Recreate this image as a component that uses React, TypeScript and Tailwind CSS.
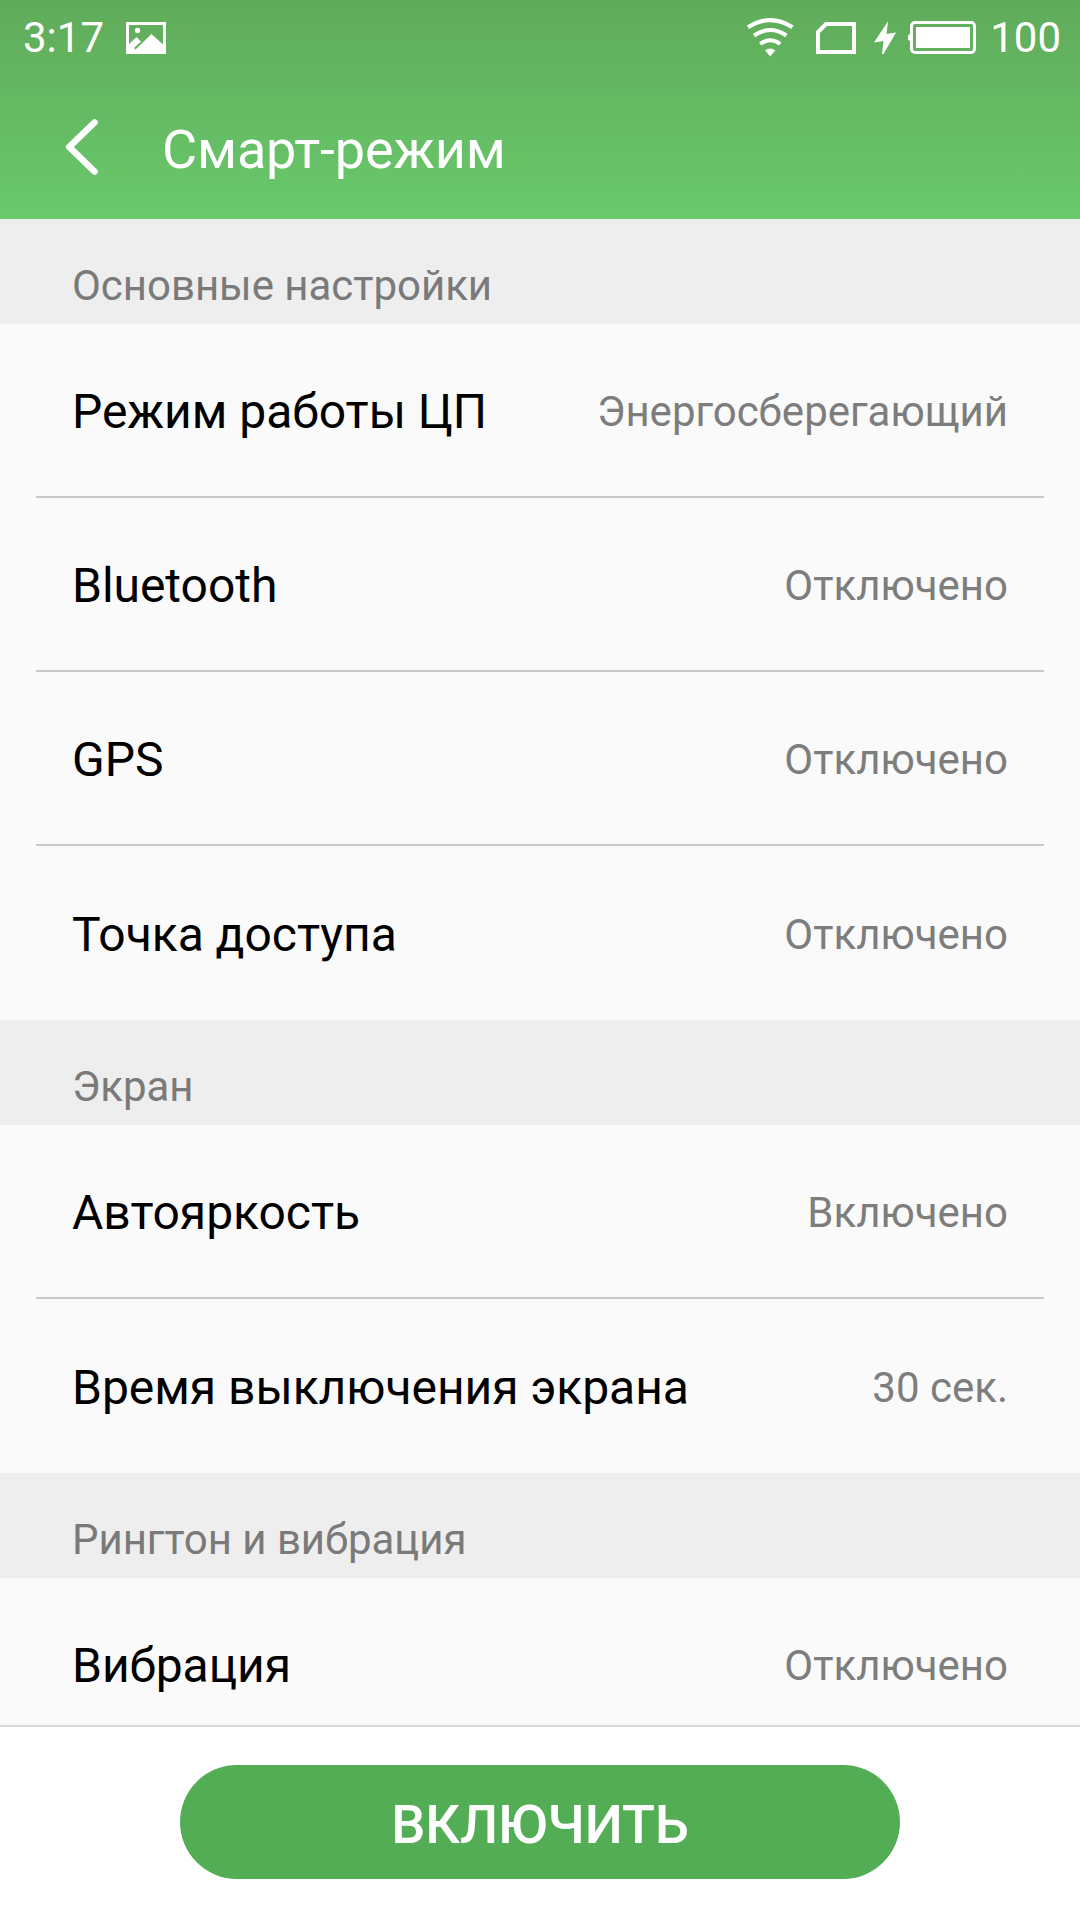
import React from 'react';

const sections = [
  {
    title: 'Основные настройки',
    rows: [
      { label: 'Режим работы ЦП', value: 'Энергосберегающий' },
      { label: 'Bluetooth', value: 'Отключено' },
      { label: 'GPS', value: 'Отключено' },
      { label: 'Точка доступа', value: 'Отключено' }
    ]
  },
  {
    title: 'Экран',
    rows: [
      { label: 'Автояркость', value: 'Включено' },
      { label: 'Время выключения экрана', value: '30 сек.' }
    ]
  },
  {
    title: 'Рингтон и вибрация',
    rows: [{ label: 'Вибрация', value: 'Отключено' }]
  }
];

const StatusBar: React.FC = () => (
  <div className="flex h-[75px] items-center justify-between pl-[23px] pr-[19px] text-[42px] text-white">
    <div className="flex items-center">
      <span className="w-[103px]">3:17</span>
      <svg className="mt-px" width="40" height="32" viewBox="0 0 40 32" fill="none">
        <rect x="1.5" y="1.5" width="37" height="29" stroke="white" strokeWidth="3" />
        <path d="M2 23 L10.5 15 L15 19.5 L8 26 L9.5 27.5 L25.5 12 L38 23.5 V30 H2 Z" fill="white" />
        <circle cx="11.5" cy="8.5" r="2.7" fill="white" />
      </svg>
    </div>
    <div className="flex items-center">
      <svg className="mt-px" width="48" height="40" viewBox="0 0 48 40" fill="none" stroke="white" strokeWidth="4">
        <path d="M2 9.2 Q24.2 -5 46.4 9.2" />
        <path d="M8 17.5 Q24.2 6.5 40.4 17.5" />
        <path d="M14.2 26 Q24.2 18.5 34.2 26" />
        <path d="M19 32.2 Q24.2 29 29.4 32.2 L24.2 38.5 Z" fill="white" stroke="none" />
      </svg>
      <svg className="ml-[22px] mt-px" width="40" height="32" viewBox="0 0 40 32" fill="none">
        <path d="M10 2 H38 V30 H2 V10 Z" stroke="white" strokeWidth="4" />
      </svg>
      <svg className="ml-[18px]" width="22" height="32" viewBox="0 0 22 32">
        <path d="M13.5 0 L0 20.5 L9.5 19 L8 32 H9.5 L22 10.5 L12.5 12 L14 0 Z" fill="white" />
      </svg>
      <svg className="ml-[12px]" width="68" height="33" viewBox="0 0 68 33" fill="none">
        <rect x="3.5" y="1.5" width="63" height="30" rx="3.5" stroke="white" strokeWidth="3" />
        <rect x="8" y="6" width="54" height="21" fill="white" />
        <path d="M3 13 H1.5 L0 14.5 V18.5 L1.5 20 H3 Z" fill="white" />
      </svg>
      <span className="ml-[14px]">100</span>
    </div>
  </div>
);

const App: React.FC = () => {
  return (
    <div className="flex h-[1920px] w-[1080px] flex-col overflow-hidden bg-[#fafafa] font-['Roboto',sans-serif]">
      {/* Header */}
      <header className="h-[219px] shrink-0 bg-linear-to-b from-[#60ab5a] to-[#69c96c]">
        <StatusBar />
        <div className="flex h-[144px] items-center pl-[65px] text-white">
          <svg width="33" height="56" viewBox="0 0 33 56" fill="none">
            <path d="M29.5 3.5 L4.2 28 L29.5 52.5" stroke="white" strokeWidth="6.6" strokeLinecap="round" strokeLinejoin="round" />
          </svg>
          <h1 className="ml-[64px] mt-[4px] text-[54px] tracking-[-0.15px]">Смарт-режим</h1>
        </div>
      </header>

      {/* Settings */}
      <main className="min-h-0 flex-1 overflow-hidden">
        {sections.map((section) => (
          <section key={section.title}>
            <h2 className="flex h-[105px] items-center bg-[#eeeeee] px-[72px] pt-[27px] text-[42px] tracking-[-0.03px] text-[#7a7a7a]">
              {section.title}
            </h2>
            <ul className="px-9">
              {section.rows.map((row) => (
                <li
                  key={row.label}
                  className="flex h-[174px] items-center justify-between border-b-2 border-[#c8c8c8] px-9 pt-[3px] last:border-transparent [&:last-child:not(:only-child)]:pt-[5px]"
                >
                  <span className="text-[48px] tracking-[-0.03px] text-black">{row.label}</span>
                  <span className="text-[42px] text-[#7d7d7d]">{row.value}</span>
                </li>
              ))}
            </ul>
          </section>
        ))}
      </main>

      {/* Bottom action */}
      <footer className="flex h-[195px] shrink-0 items-start justify-center border-t-2 border-[#d8d8d8] bg-white pt-[38px]">
        <button className="h-[114px] w-[720px] rounded-full bg-[#53ad55] pt-[4px] text-[54px] font-medium tracking-[-0.15px] text-white">
          ВКЛЮЧИТЬ
        </button>
      </footer>
    </div>
  );
};

export default App;
